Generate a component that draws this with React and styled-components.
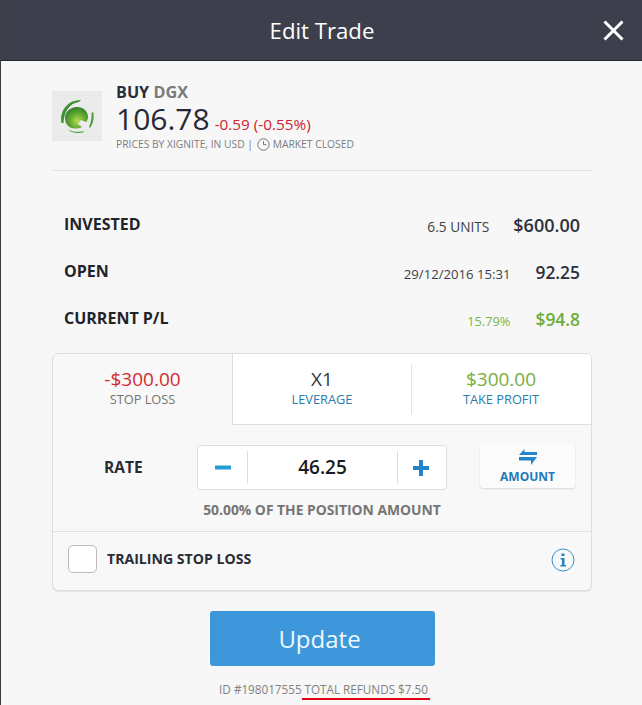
import React from "react";
import styled, { createGlobalStyle } from "styled-components";

const Global = createGlobalStyle`
  html, body { margin: 0; padding: 0; background: #f7f7f7; }
  body { font-family: "Open Sans", "Liberation Sans", sans-serif; }
  * { box-sizing: border-box; }
`;
const Page = styled.div`
  width: 642px; height: 705px; overflow: hidden; background: #f7f7f7;
  border-left: 1px solid #3a3d48; display: flex; flex-direction: column;
`;
const Header = styled.header`
  height: 61px; flex: none; background: #3d404c; border-bottom: 1px solid #24262e;
  display: flex; align-items: center; justify-content: center; position: relative;
  color: #fff; font-size: 22.2px; padding-left: 1px;
`;
const Close = styled.svg`
  position: absolute; left: 602px; top: 20px; width: 21px; height: 21px;
`;
const Body = styled.main`
  padding: 0 50px 0 51px; display: flex; flex-direction: column;
`;
const Instrument = styled.section`
  height: 110px; border-bottom: 1px solid #e2e2e2; display: flex; padding-top: 30px; gap: 14px;
`;
const Logo = styled.div`
  width: 50px; height: 50px; background: #ebebeb; display: flex; align-items: center; justify-content: center;
`;
const Info = styled.div`
  display: flex; flex-direction: column; margin-top: -9px;
`;
const Title = styled.div`
  font-size: 16.2px; line-height: 21px; font-weight: 700; color: #2b2e38;
  span { color: #7a7a7a; }
`;
const PriceLine = styled.div`
  display: flex; align-items: baseline; gap: 5px; line-height: 33px; height: 34px; margin-top: -1px;
`;
const Price = styled.span`font-size: 30px; color: #272a35;`;
const Change = styled.span`font-size: 15.3px; color: #d0222f;`;
const Source = styled.div`
  display: flex; align-items: center; gap: 1px; font-size: 10.3px; line-height: 16px; color: #7d7d7d;
  svg { margin-right: 2px; }
`;
const Stats = styled.section`
  padding: 29px 12px 0 12px; display: flex; flex-direction: column; height: 182px;
`;
const Stat = styled.div`
  height: 47px; flex: none; display: flex; align-items: center;
`;
const StatLabel = styled.div`
  font-size: 16px; font-weight: 700; color: #22242c; flex: 1;
`;
const StatNote = styled.div`
  font-size: ${p => p.$size}px; color: ${p => p.$color || "#3c3f48"};
  margin: 6px ${p => p.$gap}px 0 0;
`;
const StatValue = styled.div`
  font-size: ${p => p.$size}px; font-weight: 600; color: ${p => p.$color || "#2d303b"}; margin-top: 2px;
`;
const Card = styled.section`
  height: 238px; border: 1px solid #dedede; border-radius: 6px; background: #f8f8f8;
  box-shadow: 0 1px 1px #e4e4e4; display: flex; flex-direction: column; overflow: hidden;
`;
const Tabs = styled.div`display: flex; height: 71px; flex: none;`;
const Tab = styled.div`
  width: ${p => p.$w}px; flex: none; text-align: center; padding-top: 13px;
  background: ${p => p.$active ? "transparent" : "#fff"};
  border-bottom: ${p => p.$active ? "none" : "1px solid #dedede"};
  border-left: ${p => p.$edge ? "1px solid #dedede" : "none"};
  position: relative;
`;
const TabDivider = styled.i`
  position: absolute; left: 0; top: 10px; bottom: 10px; width: 1px; background: #e4e4e4;
`;
const TabValue = styled.div`
  font-size: 19px; line-height: 24px; color: ${p => p.$color};
`;
const TabLabel = styled.div`
  font-size: 12.8px; line-height: 17px; color: ${p => p.$color};
`;
const RateRow = styled.div`
  display: flex; align-items: flex-start; padding-top: 20px; height: 66px;
`;
const RateLabel = styled.div`
  width: 144px; padding: 11px 0 0 51px; font-size: 15.5px; font-weight: 700; color: #2a2c34;
`;
const Stepper = styled.div`
  width: 250px; height: 45px; background: #fff; border: 1px solid #dedede; border-radius: 4px;
  display: flex; align-items: center;
`;
const StepBtn = styled.div`
  width: ${p => p.$w}px; height: 100%; display: flex; align-items: center; justify-content: center;
  padding-right: ${p => p.$pad || 0}px;
`;
const StepValue = styled.div`
  flex: 1; text-align: center; font-size: 19px; font-weight: 600; color: #1b1c22;
  height: 33px; line-height: 33px;
  border-left: 1px solid #dedede; border-right: 1px solid #dedede;
`;
const AmountBtn = styled.div`
  margin: -1px 0 0 33px; width: 95px; height: 44px; background: #fbfbfb; border-radius: 3px;
  box-shadow: 0 1px 2px #d8d8d8; display: flex; flex-direction: column; align-items: center;
  padding-top: 5px; color: #2279b8; font-size: 12px; font-weight: 700; line-height: 16px;
  svg { margin-bottom: 4px; flex: none; }
`;
const Percent = styled.div`
  text-align: center; font-size: 13.85px; font-weight: 700; color: #757575; height: 40px; line-height: 19px;
  padding-top: 9px;
`;
const Trailing = styled.div`
  flex: 1; border-top: 1px solid #e0e0e0; display: flex; align-items: center; padding: 0 16px 5px 15px;
  svg { margin-top: 3px; }
`;
const Check = styled.div`
  width: 29px; height: 28px; background: #fff; border: 1px solid #bcbcbc; border-radius: 5px; margin-right: 10px;
`;
const TrailingLabel = styled.div`
  flex: 1; font-size: 14.1px; font-weight: 700; color: #2a2c34;
`;
const Update = styled.button`
  align-self: center; margin: 20px 0 0 1px; width: 225px; height: 55px; border: none; border-radius: 3px;
  background: #3d97da; color: #eef7ff; font: 400 24px "Open Sans", sans-serif; padding: 0 6px 0 0;
`;
const Footer = styled.div`
  margin: 15px 0 0 5px; text-align: center; font-size: 11.7px; line-height: 17px; color: #818181;
  span { display: inline-block; border-bottom: 2px solid #e00012; height: 19px; padding: 0 2px 0 3px; }
`;

const GreenLogo = () => (
  <svg width="34" height="34" viewBox="0 0 34 34">
    <defs>
      <radialGradient id="lg" cx="0.55" cy="0.65" r="0.65">
        <stop offset="0" stopColor="#b8dd5e" />
        <stop offset="0.5" stopColor="#66ad30" />
        <stop offset="1" stopColor="#2f7d2a" />
      </radialGradient>
    </defs>
    <path d="M17 8C23 8 28 12 28 18C28 20 27 22 26 23L21 21L18 25L22 28C20 29 18 29.500 15 29.500C9 29.500 5 25 5 19C5 13 10 8 17 8Z" fill="url(#lg)" />
    <path d="M1.500 24C-1 12 8 .5 21 1L19 3C10 4 4 12 3.500 24Z" fill="#3f8f35" />
    <path d="M33 13C34.500 18 33.500 24 30 29L29 28C31 23 32 18 31.500 14Z" fill="#4a9a38" />
    <path d="M9 31C13 33 19 33.500 24 32L23 33.500C18 34.500 13 34 9.500 32Z" fill="#4a9a38" />
  </svg>
);

export default function App() {
  return (
    <Page>
      <Global />
      <Header>
        Edit Trade
        <Close viewBox="0 0 21 21"><path d="M1.500 1.500 19.500 19.500M19.500 1.500 1.500 19.500" stroke="#fff" strokeWidth="3" fill="none" /></Close>
      </Header>
      <Body>
        <Instrument>
          <Logo><GreenLogo /></Logo>
          <Info>
            <Title>BUY <span>DGX</span></Title>
            <PriceLine><Price>106.78</Price><Change>-0.59 (-0.55%)</Change></PriceLine>
            <Source>
              PRICES BY XIGNITE, IN USD&nbsp;|&nbsp;
              <svg width="13" height="13" viewBox="0 0 13 13"><circle cx="6.500" cy="6.500" r="5.700" fill="none" stroke="#777" strokeWidth="1" /><path d="M6.500 3.200v3.500h3" fill="none" stroke="#777" strokeWidth="1" /></svg>
              MARKET CLOSED
            </Source>
          </Info>
        </Instrument>
        <Stats>
          <Stat><StatLabel>INVESTED</StatLabel><StatNote $size={13.7} $gap={24}>6.5 UNITS</StatNote><StatValue $size={18}>$600.00</StatValue></Stat>
          <Stat><StatLabel>OPEN</StatLabel><StatNote $size={13.15} $gap={25}>29/12/2016 15:31</StatNote><StatValue $size={17.4}>92.25</StatValue></Stat>
          <Stat><StatLabel>CURRENT P/L</StatLabel><StatNote $size={12.8} $gap={25} $color="#7ab648">15.79%</StatNote><StatValue $size={17.4} $color="#6cae35">$94.8</StatValue></Stat>
        </Stats>
        <Card>
          <Tabs>
            <Tab $w={179} $active><TabValue $color="#cf2a2f">-$300.00</TabValue><TabLabel $color="#757575">STOP LOSS</TabLabel></Tab>
            <Tab $w={179} $edge><TabValue $color="#33353d">X1</TabValue><TabLabel $color="#2b7cab">LEVERAGE</TabLabel></Tab>
            <Tab $w={180}><TabDivider /><TabValue $color="#79ad3c">$300.00</TabValue><TabLabel $color="#2b7cab">TAKE PROFIT</TabLabel></Tab>
          </Tabs>
          <RateRow>
            <RateLabel>RATE</RateLabel>
            <Stepper>
              <StepBtn $w={49}><svg width="16" height="5"><rect width="16" height="4" y="0.500" fill="#259bd6" /></svg></StepBtn>
              <StepValue>46.25</StepValue>
              <StepBtn $w={48} $pad={2}><svg width="16" height="16"><path d="M0 6h16v4H0zM6 0h4v16H6z" fill="#2484c6" /></svg></StepBtn>
            </Stepper>
            <AmountBtn>
              <svg width="18" height="16" viewBox="0 0 18 16"><path d="M5.500 0v3h12.500v3H0ZM0 8h18L12 16v-4.500H0Z" fill="#2484c6" /></svg>
              AMOUNT
            </AmountBtn>
          </RateRow>
          <Percent>50.00% OF THE POSITION AMOUNT</Percent>
          <Trailing>
            <Check />
            <TrailingLabel>TRAILING STOP LOSS</TrailingLabel>
            <svg width="24" height="24" viewBox="0 0 24 24">
              <circle cx="12" cy="12" r="11" fill="none" stroke="#3a8fc0" strokeWidth="1" />
              <path d="M10.500 5.500h3v2.500h-3zM9.500 10h4v7h1.500v1.500H9.500V17H11v-5.500H9.500Z" fill="#2484b8" />
            </svg>
          </Trailing>
        </Card>
        <Update>Update</Update>
        <Footer>ID #198017555<span>TOTAL REFUNDS $7.50</span></Footer>
      </Body>
    </Page>
  );
}
